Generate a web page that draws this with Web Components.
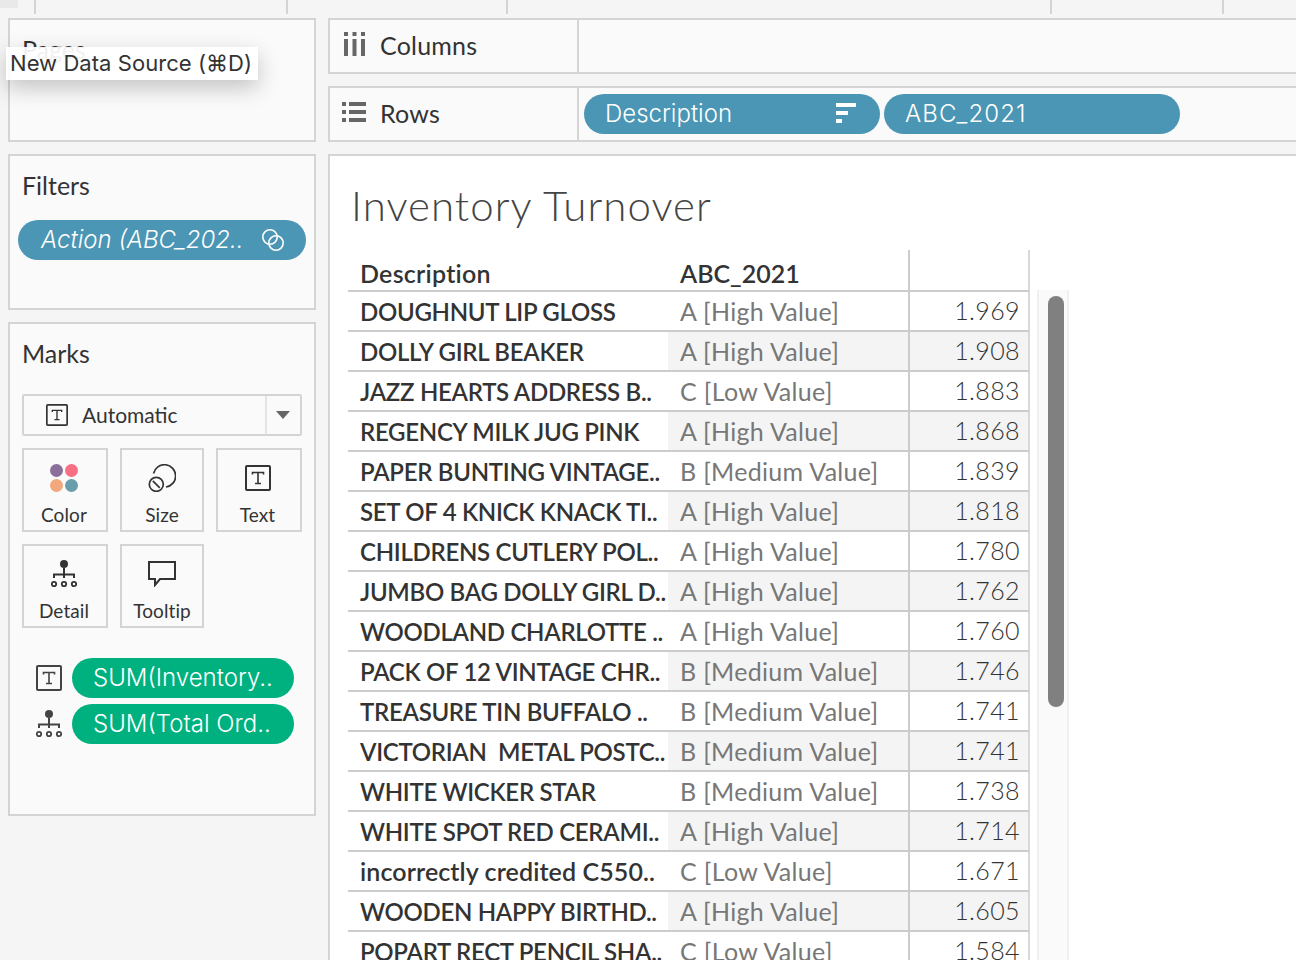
<!DOCTYPE html>
<html lang="en">
<head>
<meta charset="utf-8">
<title>Inventory Turnover</title>
<style>
  html, body { margin: 0; height: 100%; overflow: hidden; background: #f5f5f5; }
  body { font-family: "Lato", "Liberation Sans", sans-serif; color: #333; }
</style>
</head>
<body>
<tb-workspace>
  <tb-card slot="side" label="Pages" style="height:124px"></tb-card>
  <tb-card slot="side" label="Filters" style="height:156px">
    <tb-pill color="blue" width="288" italic icon="link" pad="23">Action (ABC_202..</tb-pill>
  </tb-card>
  <tb-card slot="side" label="Marks" style="height:494px">
    <tb-marks></tb-marks>
  </tb-card>

  <tb-shelf slot="main" label="Columns" icon="columns"></tb-shelf>
  <tb-shelf slot="main" label="Rows" icon="rows">
    <tb-pill color="blue" width="296" icon="sort" pad="21">Description</tb-pill>
    <tb-pill color="blue" width="296" pad="21" style="letter-spacing:1.1px">ABC_2021</tb-pill>
  </tb-shelf>
  <tb-sheet slot="main" heading="Inventory Turnover"></tb-sheet>
</tb-workspace>
<tb-tooltip>New Data Source (⌘D)</tb-tooltip>

<script>
// Iconos dibujados a mano, todos en su propio viewBox
const ICONS = {
  text: `<svg viewBox="0 0 26 26" fill="none" stroke="currentColor"><rect x="1" y="1" width="24" height="24" rx="1" stroke-width="2"/><path d="M7.5 9.5V7.5H18.5V9.5M13 7.5V18.5M10 18.5H16" stroke-width="1.6"/></svg>`,
  detail: `<svg viewBox="0 0 26 28" fill="none" stroke="currentColor"><circle cx="13" cy="4" r="4" fill="currentColor" stroke="none"/><path d="M13 8V18M3 18V14.5H23V18" stroke-width="2"/><circle cx="3" cy="24" r="2.2" stroke-width="1.8"/><circle cx="13" cy="24" r="2.2" stroke-width="1.8"/><circle cx="23" cy="24" r="2.2" stroke-width="1.8"/></svg>`,
  color: `<svg viewBox="0 0 28 28"><circle cx="6.5" cy="6.5" r="6.5" fill="#8a6f9b"/><circle cx="21.5" cy="6.5" r="6.5" fill="#f76f84"/><circle cx="6.5" cy="21.5" r="6.5" fill="#f2a77c"/><circle cx="21.5" cy="21.5" r="6.5" fill="#6a9dac"/></svg>`,
  size: `<svg viewBox="0 0 28 28" fill="none" stroke="currentColor" stroke-width="1.7"><path d="M5.5 9.5A11.2 11.2 0 1 1 18 23"/><circle cx="8.3" cy="20.3" r="7"/><path d="M4.8 16.8L11.8 23.8"/></svg>`,
  tooltip: `<svg viewBox="0 0 28 26" fill="none" stroke="currentColor" stroke-width="2"><path d="M1 1H27V18H12L7 24V18H1Z" stroke-linejoin="miter"/></svg>`,
  link: `<svg viewBox="0 0 22 22" fill="none" stroke="currentColor" stroke-width="1.6"><circle cx="8" cy="8" r="7.2"/><circle cx="14" cy="14" r="7.2"/></svg>`,
  sort: `<svg viewBox="0 0 20 20" fill="currentColor"><rect x="0" y="0" width="20" height="4"/><rect x="0" y="8" width="12" height="4"/><rect x="0" y="16" width="6" height="4"/></svg>`,
  columns: `<svg viewBox="0 0 21 24" fill="currentColor"><rect x="0" y="0" width="4" height="4"/><rect x="8.5" y="0" width="4" height="4"/><rect x="17" y="0" width="4" height="4"/><rect x="0" y="7" width="4" height="17"/><rect x="8.5" y="7" width="4" height="17"/><rect x="17" y="7" width="4" height="17"/></svg>`,
  rows: `<svg viewBox="0 0 24 20" fill="currentColor"><rect x="0" y="0" width="4" height="4"/><rect x="0" y="8" width="4" height="4"/><rect x="0" y="16" width="4" height="4"/><rect x="7" y="0" width="17" height="4"/><rect x="7" y="8" width="17" height="4"/><rect x="7" y="16" width="17" height="4"/></svg>`
};

// Marco general: franja superior, columna lateral y columna principal
class TbWorkspace extends HTMLElement {
  constructor() {
    super();
    this.attachShadow({ mode: 'open' });
    this.shadowRoot.innerHTML = `
      <style>
        :host { display: block; width: 1296px; height: 960px; overflow: hidden; }
        .ticks { display: flex; height: 14px; margin-bottom: 4px; }
        .ticks i { display: block; box-sizing: border-box; height: 14px; border-right: 2px solid #d4d4d4; }
        .corner { position: absolute; left: 0; top: 0; width: 18px; height: 8px; background: #e9e9e9; }
        .body { display: flex; gap: 12px; padding-left: 8px; }
        .side { display: flex; flex-direction: column; gap: 12px; width: 308px; flex: none; }
        .main { display: flex; flex-direction: column; gap: 12px; width: 980px; flex: none; }
      </style>
      <div class="corner"></div>
      <div class="ticks">
        <i style="width:36px"></i><i style="width:252px"></i><i style="width:220px"></i>
        <i style="width:544px"></i><i style="width:172px"></i>
      </div>
      <div class="body">
        <div class="side"><slot name="side"></slot></div>
        <div class="main"><slot name="main"></slot></div>
      </div>`;
  }
}

class TbCard extends HTMLElement {
  constructor() {
    super();
    this.attachShadow({ mode: 'open' });
    this.shadowRoot.innerHTML = `
      <style>
        :host { display: block; box-sizing: border-box; border: 2px solid #d4d4d4; background: #fafafa; }
        .label { font: 400 25px/30px "Lato", sans-serif; color: #333; padding: 14px 0 0 12px; height: 30px; }
        .content { padding: 20px 8px 0; }
      </style>
      <div class="label">${this.getAttribute('label')}</div>
      <div class="content"><slot></slot></div>`;
  }
}

class TbIcon extends HTMLElement {
  constructor() {
    super();
    this.attachShadow({ mode: 'open' });
    const w = this.getAttribute('w') || 24;
    const h = this.getAttribute('h') || 24;
    this.shadowRoot.innerHTML = `
      <style>
        :host { display: block; flex: none; width: ${w}px; height: ${h}px; }
        svg { display: block; width: 100%; height: 100%; }
      </style>
      ${ICONS[this.getAttribute('name')]}`;
  }
}

class TbPill extends HTMLElement {
  constructor() {
    super();
    this.attachShadow({ mode: 'open' });
    const bg = this.getAttribute('color') === 'green' ? '#00b180' : '#4b96b4';
    const icon = this.getAttribute('icon');
    const pad = this.getAttribute('pad') || 21;
    const style = this.hasAttribute('italic') ? 'italic' : 'normal';
    const size = icon === 'sort' ? 20 : 22;
    this.shadowRoot.innerHTML = `
      <style>
        :host {
          display: flex; align-items: center; justify-content: space-between; box-sizing: border-box;
          flex: none; width: ${this.getAttribute('width')}px; height: 40px; border-radius: 20px;
          background: ${bg}; color: #fff; padding: 0 ${icon === 'sort' ? 24 : 22}px 0 ${pad}px;
          font: ${style} 300 24px/38px "Inter", sans-serif; white-space: nowrap;
        }
        tb-icon[name="sort"] { margin-top: -2px; }
      </style>
      <span><slot></slot></span>
      ${icon ? `<tb-icon name="${icon}" w="${size}" h="${size}"></tb-icon>` : ''}`;
  }
}

// Estante de Columns / Rows
class TbShelf extends HTMLElement {
  constructor() {
    super();
    this.attachShadow({ mode: 'open' });
    const rows = this.getAttribute('icon') === 'rows';
    this.shadowRoot.innerHTML = `
      <style>
        :host { display: flex; box-sizing: border-box; height: 56px; border: 2px solid #d4d4d4; border-right: 0; background: #fafafa; }
        .head {
          display: flex; align-items: center; box-sizing: border-box; flex: none; width: 249px;
          border-right: 2px solid #d4d4d4; padding: 0 0 4px ${rows ? 12 : 14}px; color: #666;
        }
        .head span { font: 400 25px/30px "Lato", sans-serif; letter-spacing: .2px; color: #333; margin: 2px 0 0 ${rows ? 14 : 15}px; }
        .pills { display: flex; align-items: center; gap: 4px; padding-left: 5px; }
      </style>
      <div class="head">
        <tb-icon name="${this.getAttribute('icon')}" w="${rows ? 24 : 21}" h="${rows ? 20 : 24}"></tb-icon>
        <span>${this.getAttribute('label')}</span>
      </div>
      <div class="pills"><slot></slot></div>`;
  }
}

class TbMarkButton extends HTMLElement {
  constructor() {
    super();
    this.attachShadow({ mode: 'open' });
    const w = this.getAttribute('w') || 28;
    const h = this.getAttribute('h') || w;
    this.shadowRoot.innerHTML = `
      <style>
        :host {
          display: flex; flex-direction: column; align-items: center; box-sizing: border-box; height: 84px;
          border: 2px solid #d4d4d4; color: #333; padding-right: ${this.getAttribute('nudge') || 0}px;
        }
        .ico { display: flex; align-items: center; justify-content: center; height: 30px; margin-top: 13px; color: #333; }
        span { font: 400 19px/24px "Lato", sans-serif; letter-spacing: .1px; margin-top: 10px; }
      </style>
      <div class="ico"><tb-icon name="${this.getAttribute('icon')}" w="${w}" h="${h}"></tb-icon></div>
      <span>${this.getAttribute('label')}</span>`;
  }
}

// Tarjeta de marcas: selector, botones y campos
class TbMarks extends HTMLElement {
  constructor() {
    super();
    this.attachShadow({ mode: 'open' });
    this.shadowRoot.innerHTML = `
      <style>
        :host { display: block; padding: 0 4px; margin-top: 6px; }
        .select {
          display: flex; align-items: center; box-sizing: border-box; width: 280px; height: 42px;
          border: 2px solid #d4d4d4; border-radius: 2px; color: #333;
        }
        .select .type { display: flex; align-items: center; gap: 14px; flex: 1; padding-left: 22px; font: 400 21px/26px "Lato", sans-serif; }
        .select .arrow { display: flex; align-items: center; justify-content: center; width: 32px; padding-right: 1px; height: 38px; border-left: 2px solid #e4e4e4; }
        .select .arrow i { width: 0; height: 0; border: 7px solid transparent; border-top: 8px solid #666; border-bottom: 0; }
        .grid { display: grid; grid-template-columns: 86px 84px 86px; grid-auto-rows: 84px; gap: 12px; margin-top: 12px; }
        .fields { display: grid; grid-template-columns: 26px 222px; column-gap: 10px; row-gap: 6px; align-items: center; margin: 30px 0 0 14px; color: #444; }
      </style>
      <div class="select">
        <div class="type"><tb-icon name="text" w="22" h="22"></tb-icon>Automatic</div>
        <div class="arrow"><i></i></div>
      </div>
      <div class="grid">
        <tb-mark-button icon="color" label="Color" nudge="2"></tb-mark-button>
        <tb-mark-button icon="size" label="Size"></tb-mark-button>
        <tb-mark-button icon="text" label="Text" w="26" nudge="3"></tb-mark-button>
        <tb-mark-button icon="detail" label="Detail" w="26" h="28" nudge="2"></tb-mark-button>
        <tb-mark-button icon="tooltip" label="Tooltip" w="28" h="26"></tb-mark-button>
      </div>
      <div class="fields">
        <tb-icon name="text" w="26" h="26"></tb-icon>
        <tb-pill color="green" width="222">SUM(Inventory..</tb-pill>
        <tb-icon name="detail" w="26" h="28"></tb-icon>
        <tb-pill color="green" width="222">SUM(Total Ord..</tb-pill>
      </div>`;
  }
}

const ROWS = [
  ['DOUGHNUT LIP GLOSS', 'A [High Value]', '1.969'],
  ['DOLLY GIRL BEAKER', 'A [High Value]', '1.908'],
  ['JAZZ HEARTS ADDRESS B..', 'C [Low Value]', '1.883'],
  ['REGENCY MILK JUG PINK', 'A [High Value]', '1.868'],
  ['PAPER BUNTING VINTAGE..', 'B [Medium Value]', '1.839'],
  ['SET OF 4 KNICK KNACK TI..', 'A [High Value]', '1.818'],
  ['CHILDRENS CUTLERY POL..', 'A [High Value]', '1.780'],
  ['JUMBO BAG DOLLY GIRL D..', 'A [High Value]', '1.762'],
  ['WOODLAND CHARLOTTE ..', 'A [High Value]', '1.760'],
  ['PACK OF 12 VINTAGE CHR..', 'B [Medium Value]', '1.746'],
  ['TREASURE TIN BUFFALO ..', 'B [Medium Value]', '1.741'],
  ['VICTORIAN  METAL POSTC..', 'B [Medium Value]', '1.741'],
  ['WHITE WICKER STAR', 'B [Medium Value]', '1.738'],
  ['WHITE SPOT RED CERAMI..', 'A [High Value]', '1.714'],
  ['incorrectly credited C550..', 'C [Low Value]', '1.671'],
  ['WOODEN HAPPY BIRTHD..', 'A [High Value]', '1.605'],
  ['POPART RECT PENCIL SHA..', 'C [Low Value]', '1.584']
];

// Hoja con el título y la tabla de datos
class TbSheet extends HTMLElement {
  constructor() {
    super();
    this.attachShadow({ mode: 'open' });
    const rows = ROWS.map((r, i) => `
      <div class="row ${i % 2 ? 'odd' : ''}">
        <div class="desc ${r[0] === r[0].toUpperCase() ? '' : 'lower'}">${r[0]}</div>
        <div class="abc">${r[1]}</div>
        <div class="val">${r[2]}</div>
      </div>`).join('');
    this.shadowRoot.innerHTML = `
      <style>
        :host { display: block; box-sizing: border-box; height: 806px; border: 2px solid #d4d4d4; border-right: 0; border-bottom: 0; background: #fff; overflow: hidden; }
        h1 { margin: 0; height: 94px; box-sizing: border-box; padding: 23px 0 0 21px; font: 300 42px/52px "Lato", sans-serif; letter-spacing: 1.05px; color: #444; }
        .wrap { display: flex; margin-left: 18px; }
        .table { width: 682px; flex: none; }
        .row { display: grid; grid-template-columns: 320px 240px 122px; height: 40px; }
        .row > div { box-sizing: border-box; border-bottom: 2px solid #ccc; white-space: pre; overflow: hidden; }
        .desc { padding: 1px 0 0 12px; font: 600 24px/37px "Lato", sans-serif; letter-spacing: -.3px; color: #333; }
        .desc.lower { font-size: 25px; letter-spacing: .1px; }
        .abc { padding-left: 12px; font: 400 25px/38px "Lato", sans-serif; letter-spacing: .3px; color: #777; }
        .val { padding-right: 8px; text-align: right; border-left: 2px solid #ccc; border-right: 2px solid #d8d8d8; font: 300 25px/36px "Lato", sans-serif; letter-spacing: .4px; color: #333; }
        .odd .abc, .odd .val { background: #f4f4f4; }
        .row.head { height: 42px; }
        .row.head > div { padding-top: 7px; line-height: 33px; color: #333; }
        .row.head .desc { font-size: 25px; letter-spacing: .25px; }
        .row.head .abc { font-size: 25px; font-weight: 600; letter-spacing: 0; }
        .track {
          box-sizing: border-box; width: 32px; margin: 40px 0 0 7px; padding: 6px 0 0 9px; height: 700px;
          background: #fafafa; border-left: 2px solid #f0f0f0; border-right: 2px solid #f0f0f0;
        }
        .thumb { width: 16px; height: 411px; border-radius: 8px; background: #808080; }
      </style>
      <h1>${this.getAttribute('heading')}</h1>
      <div class="wrap">
        <div class="table">
          <div class="row head"><div class="desc lower">Description</div><div class="abc">ABC_2021</div><div class="val"></div></div>
          ${rows}
        </div>
        <div class="track"><div class="thumb"></div></div>
      </div>`;
  }
}

class TbTooltip extends HTMLElement {
  constructor() {
    super();
    this.attachShadow({ mode: 'open' });
    this.shadowRoot.innerHTML = `
      <style>
        :host {
          position: absolute; left: 6px; top: 47px; box-sizing: border-box; width: 252px; height: 33px;
          padding-left: 4px; background: rgba(255,255,255,.93); box-shadow: 0 8px 22px rgba(0,0,0,.22);
          font: 400 22px/33px "Inter", "DejaVu Sans", sans-serif; letter-spacing: .05px; color: #333; white-space: nowrap;
        }
      </style>
      <slot></slot>`;
  }
}

customElements.define('tb-icon', TbIcon);
customElements.define('tb-pill', TbPill);
customElements.define('tb-card', TbCard);
customElements.define('tb-shelf', TbShelf);
customElements.define('tb-mark-button', TbMarkButton);
customElements.define('tb-marks', TbMarks);
customElements.define('tb-sheet', TbSheet);
customElements.define('tb-tooltip', TbTooltip);
customElements.define('tb-workspace', TbWorkspace);
</script>
</body>
</html>
